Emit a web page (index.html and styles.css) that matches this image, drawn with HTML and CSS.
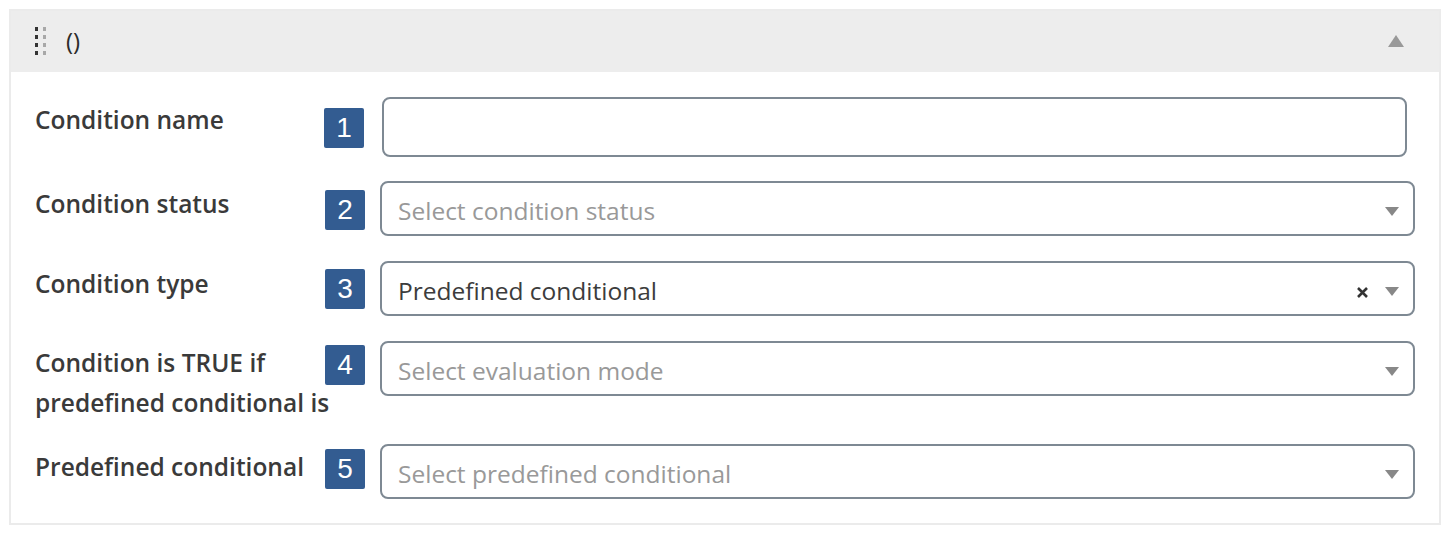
FILE: index.html
```html
<!DOCTYPE html>
<html lang="en">
<head>
<meta charset="utf-8">
<title>Condition</title>
<link rel="stylesheet" href="styles.css">
</head>
<body>
<div class="panel">
  <div class="panel-head">
    <svg class="drag" width="12" height="28" viewBox="0 0 12 28" aria-hidden="true">
      <rect x="0" y="0" width="3" height="4" fill="#333"/>
      <rect x="0" y="8" width="3" height="4" fill="#333"/>
      <rect x="0" y="16" width="3" height="4" fill="#333"/>
      <rect x="0" y="24" width="3" height="4" fill="#333"/>
      <rect x="8" y="0" width="3" height="4" fill="#a8a8a8"/>
      <rect x="8" y="8" width="3" height="4" fill="#a8a8a8"/>
      <rect x="8" y="16" width="3" height="4" fill="#a8a8a8"/>
      <rect x="8" y="24" width="3" height="4" fill="#a8a8a8"/>
    </svg>
    <span class="title">()</span>
    <span class="toggle"></span>
  </div>
  <div class="panel-body">
    <div class="row">
      <label class="lbl">Condition name</label>
      <span class="badge b1">1</span>
      <div class="text-input"></div>
    </div>
    <div class="row row-2">
      <label class="lbl">Condition status</label>
      <span class="badge b2">2</span>
      <div class="select">
        <span class="val placeholder">Select condition status</span>
        <span class="arrow"></span>
      </div>
    </div>
    <div class="row row-3">
      <label class="lbl">Condition type</label>
      <span class="badge b3">3</span>
      <div class="select">
        <span class="val">Predefined conditional</span>
        <svg class="clear" width="11" height="11" viewBox="0 0 11 11" aria-hidden="true">
          <path d="M1 1 L10 10 M10 1 L1 10" stroke="#333" stroke-width="2.6" stroke-linecap="butt"/>
        </svg>
        <span class="arrow"></span>
      </div>
    </div>
    <div class="row row-4">
      <label class="lbl lbl-2">Condition is TRUE if predefined conditional is</label>
      <span class="badge b4">4</span>
      <div class="select">
        <span class="val placeholder">Select evaluation mode</span>
        <span class="arrow"></span>
      </div>
    </div>
    <div class="row">
      <label class="lbl">Predefined conditional</label>
      <span class="badge b5">5</span>
      <div class="select">
        <span class="val placeholder">Select predefined conditional</span>
        <span class="arrow"></span>
      </div>
    </div>
  </div>
</div>
</body>
</html>
```
FILE: styles.css
```css
html, body {
  margin: 0;
  padding: 0;
  background: #fff;
}

body {
  padding: 9px;
  font-family: "Open Sans", "Noto Sans", sans-serif;
  color: #333;
}

.panel {
  width: 1432px;
  height: 516px;
  box-sizing: border-box;
  border: 2px solid #ebebeb;
  background: #fff;
}

.panel-head {
  height: 61px;
  background: #ededed;
  display: flex;
  align-items: center;
  padding: 0 35px 0 24px;
}

.drag {
  display: block;
  margin-top: -1px;
}

.title {
  margin-left: 19px;
  font-size: 24px;
  color: #2b2b2b;
  flex: 1;
  line-height: 1;
  margin-top: -2px;
}

.toggle {
  width: 0;
  height: 0;
  border-left: 8.5px solid transparent;
  border-right: 8.5px solid transparent;
  border-bottom: 12px solid #999;
  margin-top: -2px;
}

.panel-body {
  padding: 25px 24px 0 24px;
  display: flex;
  flex-direction: column;
  gap: 24px;
}

.row {
  position: relative;
  display: flex;
  align-items: flex-start;
}

.row-3,
.row-4 {
  margin-top: 1px;
}

.row-4 {
  margin-bottom: -3px;
}

.lbl {
  width: 345px;
  flex: 0 0 345px;
  font-size: 24.5px;
  font-weight: 600;
  line-height: 40px;
  color: #3a3a3a;
  margin-top: 3px;
}

.lbl-2 {
  width: 306px;
  flex: 0 0 306px;
  margin-right: 39px;
  margin-top: 2px;
}

.badge {
  position: absolute;
  left: 290px;
  width: 40px;
  height: 40px;
  background: #335c91;
  color: #fff;
  border-radius: 2px;
  font-family: "Liberation Sans", Arial, sans-serif;
  font-size: 28px;
  line-height: 40px;
  text-align: center;
}

.b1 { top: 11px; left: 289px; }
.b2 { top: 9px; }
.b3 { top: 8px; }
.b4 { top: 4px; }
.b5 { top: 5px; }

.text-input {
  flex: 1;
  height: 60px;
  box-sizing: border-box;
  border: 2px solid #7e8993;
  border-radius: 8px;
  margin: 0 8px 0 2px;
  background: #fff;
}

.select {
  flex: 1;
  height: 55px;
  box-sizing: border-box;
  border: 2px solid #7e8993;
  border-radius: 8px;
  background: #fff;
  display: flex;
  align-items: center;
  padding: 5px 14px 0 16px;
}

.val {
  flex: 1;
  font-size: 24.5px;
  line-height: 46px;
  color: #3c3c3c;
  white-space: nowrap;
}

.val.placeholder {
  color: #999;
}

.clear {
  display: block;
  margin-right: 17px;
  margin-top: 3px;
}

.arrow {
  width: 0;
  height: 0;
  border-left: 7.5px solid transparent;
  border-right: 7.5px solid transparent;
  border-top: 9px solid #888;
  margin-top: 1px;
}
```
